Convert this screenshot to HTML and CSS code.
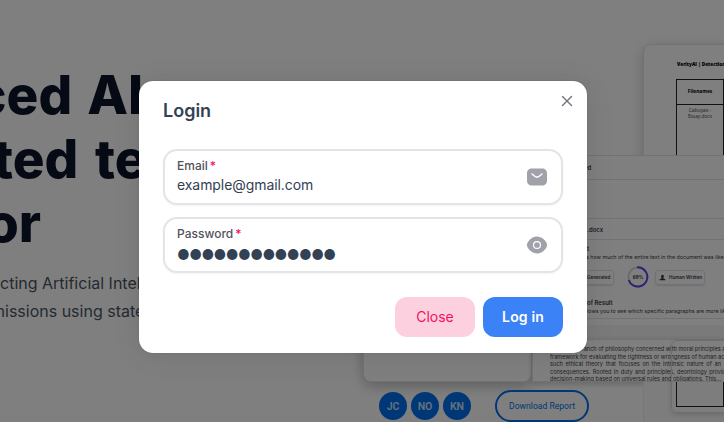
FILE: index.html
```html
<!DOCTYPE html>
<html lang="en">
<head>
<meta charset="utf-8">
<title>Login</title>
<link rel="stylesheet" href="styles.css">
</head>
<body>
<main class="page">
  <section class="hero">
    <h1 class="headline"><span class="l1">ced AI</span><span class="l2">ted te</span><span class="l3">or</span></h1>
    <p class="lead"><span class="p1">cting Artificial Intell</span><span class="p2">missions using state</span></p>
  </section>
  <div class="collage">
    <div class="sheet report">
      <b class="report-title">VerityAI | Detection</b>
      <div class="table"><b class="th">Filenames</b><span class="td">Cabuyao -<br>Essay.docx</span></div>
    </div>
    <div class="sheet preview"></div>
    <div class="sheet results">
      <div class="row uploaded">ed</div>
      <div class="row gap"></div>
      <div class="row doc">.docx</div>
      <div class="row result">
        <b class="first">t</b>
        <span class="small s1">s how much of the entire text in the document was likely</span>
        <div class="chips">
          <span class="chip generated">Generated</span>
          <svg class="ring" viewBox="0 0 24 24"><circle cx="12" cy="12" r="9.6" fill="none" stroke="#d4d4dc" stroke-width="1.800"/><path d="M11 2.400A9.600 9.600 0 1 1 2.700 15" fill="none" stroke="#5b45e8" stroke-width="2"/><text x="12" y="13.800">68%</text></svg>
          <span class="chip human"><svg viewBox="0 0 10 10"><path d="M5 1c2.800 0 2 4.300.8 5L9 7.500V9H1V7.500L4.200 6C3 5.300 2.200 1 5 1z" fill="#334"/></svg>Human Written</span>
        </div>
        <b class="second">of Result</b>
        <span class="small s2">lows you to see which specific paragraphs are more likely</span>
      </div>
      <div class="divider"></div>
    </div>
    <div class="sheet passage">
      <p><span>Ethics is a branch of philosophy concerned with moral principles and</span><span>framework for evaluating the rightness or wrongness of human actions</span><span>such ethical theory that focuses on the intrinsic nature of an act</span><span>consequences. Rooted in duty and principles, deontology provides</span></p>
      <p class="last">decision-making based on universal rules and obligations. This...</p>
    </div>
    <div class="pane"></div>
    <div class="sheet tail"><div class="tail-table"></div></div>
  </div>
  <div class="actions">
    <span class="avatar">JC</span><span class="avatar">NO</span><span class="avatar">KN</span>
    <button class="download">Download Report</button>
  </div>
</main>
<div class="backdrop">
  <section class="modal" role="dialog" aria-label="Login">
    <svg class="x" viewBox="0 0 16 16"><path d="M3.500 3.500l9 9M12.500 3.500l-9 9" fill="none" stroke="#71717a" stroke-width="1.400" stroke-linecap="round"/></svg>
    <header class="head">Login</header>
    <div class="body">
      <label class="field">
        <span class="inner"><span class="label">Email<i>*</i></span><input type="text" class="mail" value="example@gmail.com"></span>
        <svg class="icon" viewBox="0 0 24 24"><path fill="#a1a1aa" d="M17 3.500H7c-3 0-5 1.500-5 5v7c0 3.500 2 5 5 5h10c3 0 5-1.500 5-5v-7c0-3.500-2-5-5-5zm.47 6.090l-3.130 2.500c-.66.530-1.500.790-2.340.790s-1.690-.26-2.340-.79l-3.130-2.500a.77.77 0 01-.12-1.060c.26-.32.730-.38 1.050-.12l3.130 2.500c.76.610 2.050.610 2.810 0l3.130-2.500c.32-.26.800-.21 1.050.12.270.320.210.800-.11 1.060z"/></svg>
      </label>
      <label class="field">
        <span class="inner"><span class="label">Password<i>*</i></span><input class="pw" type="text" value="●●●●●●●●●●●●●"></span>
        <svg class="icon" viewBox="0 0 24 24"><path fill="#a1a1aa" d="M21.250 9.150C18.940 5.520 15.560 3.430 12 3.430c-1.780 0-3.510.52-5.090 1.490-1.580.98-3 2.410-4.160 4.230-1 1.570-1 4.120 0 5.690 2.310 3.640 5.690 5.720 9.250 5.720 1.780 0 3.510-.52 5.090-1.490 1.580-.98 3-2.410 4.160-4.230 1-1.560 1-4.120 0-5.690zM12 16.040A4.040 4.040 0 1112 7.960a4.040 4.040 0 010 8.080z"/><circle cx="12" cy="12" r="2.860" fill="#a1a1aa"/></svg>
      </label>
    </div>
    <footer class="foot"><button class="btn close">Close</button><button class="btn login">Log in</button></footer>
  </section>
</div>
</body>
</html>
```
FILE: styles.css
```css
* { box-sizing: border-box; }
body { margin: 0; font-family: Inter, "Liberation Sans", sans-serif; font-optical-sizing: none; width: 724px; height: 422px; overflow: hidden; background: #fff; }
button, input { font-family: inherit; font-optical-sizing: none; }
.page { position: relative; height: 422px; overflow: hidden; }
.hero { padding-top: 63px; white-space: nowrap; }
.headline { margin: 0; font-size: 53px; line-height: 64px; font-weight: 800; font-variation-settings: "opsz" 14; color: #0b1428; }
.headline span, .lead span { display: block; }
.l1 { margin-left: -25px; word-spacing: 3.500px; }
.l2 { margin-left: -7px; word-spacing: 5px; }
.l3 { margin-left: -14px; }
.lead { margin: 14px 0 0; font-size: 16px; line-height: 28px; color: #4b5563; }
.p2 { margin-left: -9px; }
.collage { position: absolute; inset: 0; color: #3a3a4c; white-space: nowrap; }
.sheet { position: absolute; background: #fff; border: 1px solid #e4e4e7; overflow: hidden; }
.report { left: 643px; top: 44px; width: 140px; height: 150px; border-radius: 8px; box-shadow: 0 4px 14px #0003; }
.report-title { display: block; margin: 16px 0 0 33px; font-family: "Open Sans", sans-serif; font-size: 4.700px; line-height: 6px; color: #000; font-weight: 800; }
.table { width: 48px; height: 90px; margin: 12px 0 0 32px; border: 1px solid #222; display: flex; flex-direction: column; text-align: center; font-family: "Open Sans", sans-serif; font-size: 4.800px; line-height: 6px; }
.th { height: 25px; line-height: 23px; border-bottom: 1px solid #222; color: #000; }
.td { margin-top: 2px; }
.preview { left: 363px; top: 170px; width: 169px; height: 212px; border-radius: 8px; box-shadow: 0 4px 14px #0004; }
.results { left: 570px; top: 155px; width: 170px; height: 186px; font-size: 6px; }
.row { border-bottom: 1px solid #e4e4e7; }
.uploaded { height: 24px; line-height: 24px; padding-left: 13px; font-weight: 600; }
.gap { height: 39px; }
.doc { height: 21px; line-height: 22px; padding-left: 16px; font-weight: 600; }
.result { height: 79px; padding: 5px 0 0 10px; display: flex; flex-direction: column; line-height: 8px; }
.result b { font-weight: 600; }
.first { margin-left: 6px; }
.small { font-size: 5.350px; line-height: 9px; }
.s1 { margin-left: 5px; }
.s2 { margin-left: 6px; }
.chips { display: flex; align-items: center; height: 30px; }
.chip { height: 15px; border: 1px solid #e4e4e7; border-radius: 3px; box-shadow: 0 1px 2px #0002; line-height: 13px; font-size: 4.600px; font-weight: 600; display: flex; align-items: center; }
.generated { width: 33px; padding-left: 5px; }
.human { width: 50px; padding-left: 3px; gap: 3px; margin-left: 5px; }
.human svg { width: 7px; height: 7px; }
.ring { width: 24px; height: 24px; margin-left: 12px; }
.ring text { font-size: 4.500px; font-weight: 700; text-anchor: middle; fill: #334; }
.second { margin: 7px 0 0 6px; }
.divider { height: 15px; margin-top: 6px; background: #f4f4f5; }
.passage { left: 532px; top: 339px; width: 210px; height: 43px; padding: 6px 0 0 17px; font-size: 5.600px; line-height: 7.500px; box-shadow: 0 2px 6px #0003; color: #444; }
.passage p { width: 182px; margin: 0; }
.passage span { display: block; text-align-last: justify; }
.pane { position: absolute; left: 643px; top: 382px; width: 81px; height: 40px; background: #fafafa; border-left: 1px solid #eee; }
.tail { left: 671px; top: 340px; width: 80px; height: 73px; border-radius: 6px; background: #fff0; border-color: #ddd; box-shadow: 0 2px 5px #0002; }
.tail-table { height: 25px; margin: 41px 0 0 4px; width: 48px; border: solid #222; border-width: 0 1px 1px; }
.actions { position: absolute; left: 379px; top: 390px; display: flex; align-items: center; gap: 4px; }
.avatar { width: 28px; height: 28px; border-radius: 50%; background: #006fee; color: #cfe2fb; font-family: Roboto, sans-serif; font-size: 10.500px; font-weight: 600; line-height: 29px; text-align: center; }
.download { width: 94px; height: 32px; margin-left: 20px; padding: 0; border: 2px solid #006fee; border-radius: 16px; background: #fff; color: #006fee; font-family: Roboto, sans-serif; font-size: 8.600px; }
.backdrop { position: absolute; inset: 0; display: flex; justify-content: center; align-items: flex-start; padding: 81px 0 0 2px; background: rgba(0,0,0,.5); }
.modal { position: relative; width: 448px; height: 272px; background: #fff; border-radius: 14px; box-shadow: 0 0 15px #00000008, 0 2px 30px #00000014, 0 0 1px #0000004d; color: #334155; }
.x { position: absolute; right: 12px; top: 12px; width: 16px; height: 16px; }
.head { padding: 16px 24px; font-size: 18px; line-height: 28px; font-weight: 600; }
.body { display: flex; flex-direction: column; gap: 12px; padding: 8px 24px; }
.field { display: flex; justify-content: space-between; align-items: center; height: 56px; padding: 0 12px; border: 2px solid #e4e4e7; border-radius: 14px; box-shadow: 0 1px 2px #0000000d; }
.inner { display: flex; flex-direction: column; padding-bottom: 2px; }
.label { display: flex; gap: 2px; font-size: 12px; line-height: 16px; font-weight: 500; color: #52525b; }
.label i { font-style: normal; color: #f31260; }
.field input { width: 300px; height: 20px; margin: 1px 0 0; padding: 0; border: 0; outline: 0; background: none; font-size: 14px; line-height: 20px; color: #334155; }
.field .mail { letter-spacing: -.07px; }
.field .pw { letter-spacing: -.6px; position: relative; top: 1px; padding-top: 3px; }
.icon { width: 24px; height: 24px; }
.foot { display: flex; justify-content: flex-end; gap: 8px; padding: 16px 24px; }
.btn { width: 80px; height: 40px; padding: 0 0 1px; border: 0; border-radius: 12px; font-size: 14px; }
.close { background: #fdd0df; color: #f31260; }
.login { background: #3b82f6; color: #fff; font-weight: 600; letter-spacing: .15px; }
```
